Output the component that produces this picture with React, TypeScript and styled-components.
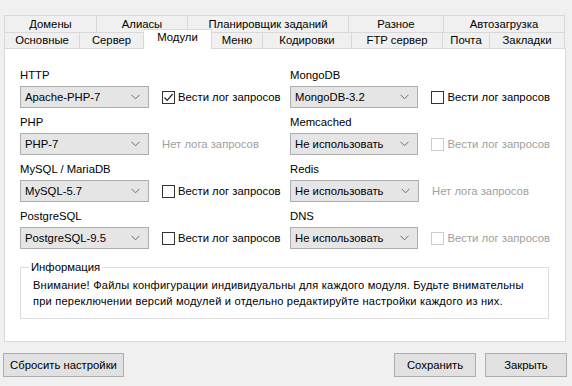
import React from "react";
import styled, { createGlobalStyle } from "styled-components";

const GlobalStyle = createGlobalStyle`
  html, body {
    margin: 0;
    padding: 0;
    background: #f0f0f0;
  }
  body {
    font-family: "Liberation Sans", Arial, sans-serif;
    font-size: 11.3px;
    color: #000;
    white-space: nowrap;
  }
`;

const topTabs = [
  { title: "Домены", width: 93 },
  { title: "Алиасы", width: 91 },
  { title: "Планировщик заданий", width: 161 },
  { title: "Разное", width: 95 },
  { title: "Автозагрузка", width: 121 },
];

const bottomTabs = [
  { title: "Основные", width: 76 },
  { title: "Сервер", width: 64 },
  { title: "Модули", width: 68, active: true },
  { title: "Меню", width: 51 },
  { title: "Кодировки", width: 89 },
  { title: "FTP сервер", width: 91 },
  { title: "Почта", width: 47 },
  { title: "Закладки", width: 75 },
];

type LogState = "checked" | "unchecked" | "disabled" | "none";

const modules: { label: string; value: string; log: LogState }[][] = [
  [
    { label: "HTTP", value: "Apache-PHP-7", log: "checked" },
    { label: "MongoDB", value: "MongoDB-3.2", log: "unchecked" },
  ],
  [
    { label: "PHP", value: "PHP-7", log: "none" },
    { label: "Memcached", value: "Не использовать", log: "disabled" },
  ],
  [
    { label: "MySQL / MariaDB", value: "MySQL-5.7", log: "unchecked" },
    { label: "Redis", value: "Не использовать", log: "none" },
  ],
  [
    { label: "PostgreSQL", value: "PostgreSQL-9.5", log: "unchecked" },
    { label: "DNS", value: "Не использовать", log: "disabled" },
  ],
];

export default function App() {
  return (
    <>
      <GlobalStyle />
      <Window>
        <TabRow>
          {topTabs.map((t) => (
            <Tab key={t.title} $width={t.width}>
              {t.title}
            </Tab>
          ))}
        </TabRow>
        <TabRow>
          {bottomTabs.map((t) => (
            <Tab key={t.title} $width={t.width} $active={t.active}>
              {t.title}
            </Tab>
          ))}
        </TabRow>
        <Panel>
          <ModuleGrid>
            {modules.flat().map((m) => (
              <Field key={m.label}>
                <FieldLabel>{m.label}</FieldLabel>
                <Controls>
                  <Combo>
                    <span>{m.value}</span>
                    <Chevron width="9" height="6" viewBox="0 0 9 6">
                      <path d="M0.5 0.8 L4.5 4.8 L8.5 0.8" fill="none" stroke="#6d6d6d" strokeWidth="1" />
                    </Chevron>
                  </Combo>
                  {m.log === "none" ? (
                    <NoLog>Нет лога запросов</NoLog>
                  ) : (
                    <CheckLabel $disabled={m.log === "disabled"}>
                      <CheckBox $disabled={m.log === "disabled"}>
                        {m.log === "checked" && (
                          <svg width="11" height="11" viewBox="0 0 11 11">
                            <path d="M1.5 5.5 L4.2 8.4 L9.6 2" fill="none" stroke="#222" strokeWidth="1.2" />
                          </svg>
                        )}
                      </CheckBox>
                      Вести лог запросов
                    </CheckLabel>
                  )}
                </Controls>
              </Field>
            ))}
          </ModuleGrid>
          <InfoGroup>
            <legend>Информация</legend>
            <InfoText>
              Внимание! Файлы конфигурации индивидуальны для каждого модуля. Будьте внимательны
              <br />
              при переключении версий модулей и отдельно редактируйте настройки каждого из них.
            </InfoText>
          </InfoGroup>
        </Panel>
        <Footer>
          <Button $width={121}>Сбросить настройки</Button>
          <FooterRight>
            <Button $width={82}>Сохранить</Button>
            <Button $width={82}>Закрыть</Button>
          </FooterRight>
        </Footer>
      </Window>
    </>
  );
}

const Window = styled.div`
  width: 572px;
  height: 386px;
  box-sizing: border-box;
  padding: 15px 6px 0 4px;
  display: flex;
  flex-direction: column;
`;

const TabRow = styled.div`
  display: flex;
  height: 17px;
  align-items: flex-end;
`;

const Tab = styled.div<{ $width: number; $active?: boolean }>`
  width: ${(p) => p.$width}px;
  height: ${(p) => (p.$active ? 20 : 17)}px;
  margin-top: ${(p) => (p.$active ? -3 : 0)}px;
  box-sizing: border-box;
  border: 1px solid #d9d9d9;
  border-left-width: 0;
  border-bottom-width: ${(p) => (p.$active ? 0 : 1)}px;
  background: ${(p) => (p.$active ? "#fff" : "#f0f0f0")};
  position: relative;
  z-index: ${(p) => (p.$active ? 2 : 1)};
  display: flex;
  align-items: center;
  justify-content: center;
  line-height: 15px;
  padding-bottom: ${(p) => (p.$active ? 4 : 0)}px;

  &:first-child {
    border-left-width: 1px;
  }
  ${TabRow}:first-child & {
    border-bottom-width: 0;
  }
`;

const Panel = styled.div`
  height: 294px;
  margin-top: -1px;
  box-sizing: border-box;
  border: 1px solid #d9d9d9;
  background: #fff;
  padding: 19px 17px 0 15px;
`;

const ModuleGrid = styled.div`
  display: grid;
  grid-template-columns: 270px 260px;
  row-gap: 7px;
`;

const Field = styled.div`
  display: flex;
  flex-direction: column;
`;

const FieldLabel = styled.div`
  height: 18px;
  line-height: 14px;
`;

const Controls = styled.div`
  display: flex;
  align-items: center;
  gap: 13px;
`;

const Combo = styled.div`
  width: 129px;
  height: 22px;
  box-sizing: border-box;
  border: 1px solid #adadad;
  background: #e5e5e5;
  display: flex;
  align-items: center;
  justify-content: space-between;
  padding: 0 8px 0 4px;
`;

const Chevron = styled.svg`
  display: block;
`;

const CheckLabel = styled.div<{ $disabled?: boolean }>`
  display: flex;
  align-items: center;
  gap: 3px;
  color: ${(p) => (p.$disabled ? "#a0a0a0" : "#000")};
`;

const CheckBox = styled.span<{ $disabled?: boolean }>`
  width: 13px;
  height: 13px;
  box-sizing: border-box;
  border: 1px solid ${(p) => (p.$disabled ? "#cccccc" : "#333")};
  background: #fff;
  display: flex;
  align-items: center;
  justify-content: center;
`;

const NoLog = styled.div`
  color: #a0a0a0;
`;

const InfoGroup = styled.fieldset`
  margin: 11px 0 0 0;
  width: 529px;
  box-sizing: border-box;
  border: 1px solid #dcdcdc;
  padding: 0 12px 9px 12px;

  legend {
    padding: 0 2px;
    margin-left: -4px;
    line-height: 14px;
  }
`;

const InfoText = styled.div`
  font-size: 11.1px;
  letter-spacing: 0.2px;
  line-height: 16px;
  margin-top: 3px;
`;

const Footer = styled.div`
  display: flex;
  justify-content: space-between;
  align-items: center;
  margin-top: 11px;
  margin-left: -1px;
  margin-right: -1px;
`;

const FooterRight = styled.div`
  display: flex;
  gap: 9px;
`;

const Button = styled.button<{ $width: number }>`
  width: ${(p) => p.$width}px;
  height: 24px;
  box-sizing: border-box;
  border: 1px solid #adadad;
  background: #e1e1e1;
  font-family: "Liberation Sans", Arial, sans-serif;
  font-size: 11.3px;
  color: #000;
  padding: 0;
`;
